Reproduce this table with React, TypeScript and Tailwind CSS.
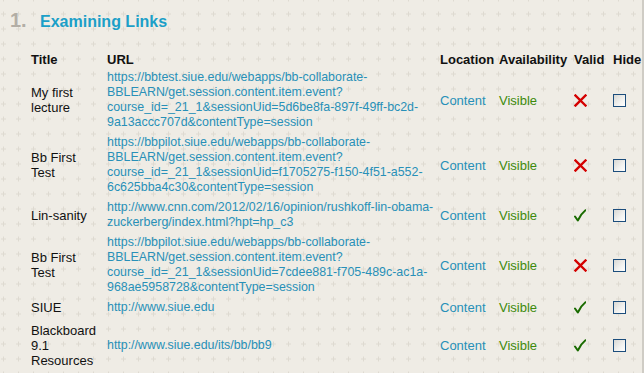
import React from "react";

type Row = {
  title: string[];
  url: string[];
  valid: boolean;
};

const rows: Row[] = [
  {
    title: ["My first", "lecture"],
    url: [
      "https://bbtest.siue.edu/webapps/bb-collaborate-",
      "BBLEARN/get.session.content.item.event?",
      "course_id=_21_1&sessionUid=5d6be8fa-897f-49ff-bc2d-",
      "9a13accc707d&contentType=session",
    ],
    valid: false,
  },
  {
    title: ["Bb First", "Test"],
    url: [
      "https://bbpilot.siue.edu/webapps/bb-collaborate-",
      "BBLEARN/get.session.content.item.event?",
      "course_id=_21_1&sessionUid=f1705275-f150-4f51-a552-",
      "6c625bba4c30&contentType=session",
    ],
    valid: false,
  },
  {
    title: ["Lin-sanity"],
    url: [
      "http://www.cnn.com/2012/02/16/opinion/rushkoff-lin-obama-",
      "zuckerberg/index.html?hpt=hp_c3",
    ],
    valid: true,
  },
  {
    title: ["Bb First", "Test"],
    url: [
      "https://bbpilot.siue.edu/webapps/bb-collaborate-",
      "BBLEARN/get.session.content.item.event?",
      "course_id=_21_1&sessionUid=7cdee881-f705-489c-ac1a-",
      "968ae5958728&contentType=session",
    ],
    valid: false,
  },
  {
    title: ["SIUE"],
    url: ["http://www.siue.edu"],
    valid: true,
  },
  {
    title: ["Blackboard", "9.1", "Resources"],
    url: ["http://www.siue.edu/its/bb/bb9"],
    valid: true,
  },
];

function Cross() {
  return (
    <svg width="13" height="13" viewBox="0 0 13 13">
      <path d="M1.5 1.5L11.5 11.5M11.5 1.5L1.5 11.5" stroke="#d40000" strokeWidth="2.4" strokeLinecap="square" />
    </svg>
  );
}

function Check() {
  return (
    <svg width="12" height="13" viewBox="0 0 12 13">
      <path d="M1 7.5L3.8 11.5C5.6 7.5 8 4 11.5 1.2" stroke="#1a6b00" strokeWidth="2" fill="none" strokeLinecap="round" strokeLinejoin="round" />
    </svg>
  );
}

function Box() {
  return (
    <div className="h-[15px] flex items-center">
      <span className="block w-[13px] h-[13px] border border-[#1c4d7c] bg-[linear-gradient(135deg,#d8d8d4_0%,#f2f2f0_60%,#ffffff_100%)]" />
    </div>
  );
}

export default function App() {
  return (
    <div className="relative w-[644px] h-[373px] overflow-hidden bg-[#efece5] font-['Liberation_Sans',Arial,sans-serif] text-[13px] leading-[15px] text-[#111111]">
      <svg className="absolute left-0 top-0" width="644" height="373">
        <defs>
          <pattern id="plus" width="15" height="15" patternUnits="userSpaceOnUse" x="1" y="11">
            <path d="M2.5 0.5V5.5M0 3H5" stroke="#dedad1" strokeWidth="1" />
          </pattern>
        </defs>
        <rect width="644" height="373" fill="url(#plus)" />
      </svg>
      <div className="absolute right-0 top-0 h-full w-[2px] bg-[#cfccc5]" />

      <div className="relative pt-[9px]">
        <div className="flex items-baseline pl-[10px] h-[22px]">
          <span className="w-[30px] text-[20px] leading-[22px] font-bold text-[#b3aea6]">1.</span>
          <span className="text-[16px] leading-[22px] font-bold text-[#1b9fc8]">Examining Links</span>
        </div>

        <div className="ml-[31px] mt-[21px] grid grid-cols-[76px_333px_59px_75px_39px_30px] items-center gap-y-[5px]">
          <div className="font-bold">Title</div>
          <div className="font-bold">URL</div>
          <div className="font-bold">Location</div>
          <div className="font-bold">Availability</div>
          <div className="font-bold">Valid</div>
          <div className="font-bold">Hide</div>

          {rows.map((r, i) => {
            const shift = i === 0 ? "-mt-[2px]" : i === 5 ? "mt-[3px]" : "";
            return (
              <React.Fragment key={i}>
                <div className={shift}>
                  {r.title.map((t, j) => (
                    <div key={j}>{t}</div>
                  ))}
                </div>
                <div className={"text-[#2890b8] text-[12.4px] whitespace-nowrap " + shift}>
                  {r.url.map((u, j) => (
                    <div key={j}>{u}</div>
                  ))}
                </div>
                <div className={"text-[#2890b8] " + shift}>Content</div>
                <div className={"text-[#3d8a0c] " + shift}>Visible</div>
                <div className={"flex items-center " + shift}>{r.valid ? <Check /> : <Cross />}</div>
                <div className={shift}>
                  <Box />
                </div>
              </React.Fragment>
            );
          })}
        </div>
      </div>
    </div>
  );
}
